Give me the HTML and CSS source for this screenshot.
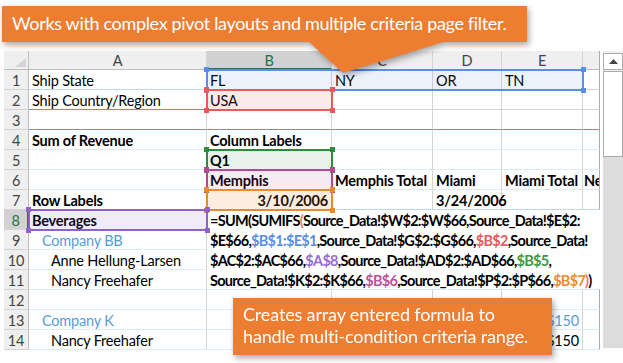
FILE: index.html
```html
<!DOCTYPE html>
<html lang="en">
<head>
  <meta charset="UTF-8">
  <title>Pivot criteria formula</title>
  <link rel="stylesheet" href="styles.css">
</head>
<body>
<div class="page">

  <div class="callout callout-top">
    Works with complex pivot layouts and multiple criteria page filter.
    <span class="pointer"></span>
  </div>

  <div class="sheet">
    <div class="grid-wrap">
      <div class="grid">
        <!-- column headers -->
        <div class="row hdr">
          <div class="corner"><svg width="25" height="19"><polygon points="11,16 22,7 22,16" fill="#d4d4d4"/></svg></div>
          <div>A</div><div class="sel">B</div><div>C</div><div>D</div><div>E</div><div class="f"></div>
        </div>

        <div class="row r1">
          <div class="rh">1</div><div>Ship State</div><div>FL</div><div>NY</div><div>OR</div><div>TN</div><div class="f"></div>
        </div>
        <div class="row r2">
          <div class="rh">2</div><div>Ship Country/Region</div><div>USA</div><div></div><div></div><div></div><div class="f"></div>
        </div>
        <div class="row r3">
          <div class="rh">3</div><div></div><div></div><div></div><div></div><div></div><div class="f"></div>
        </div>
        <div class="row pv">
          <div class="rh">4</div><div class="b">Sum of Revenue</div><div class="b">Column Labels</div><div></div><div></div><div></div><div class="f"></div>
        </div>
        <div class="row pv">
          <div class="rh">5</div><div></div><div class="b">Q1</div><div></div><div></div><div></div><div class="f"></div>
        </div>
        <div class="row pv">
          <div class="rh">6</div><div></div><div class="b">Memphis</div><div class="b">Memphis Total</div><div class="b">Miami</div><div class="b">Miami Total</div><div class="f b">Ne</div>
        </div>
        <div class="row pv r7">
          <div class="rh">7</div><div class="b">Row Labels</div><div class="b num">3/10/2006</div><div></div><div class="b num">3/24/2006</div><div></div><div class="f"></div>
        </div>
        <div class="row pv">
          <div class="rh active">8</div><div class="b">Beverages</div><div></div><div></div><div></div><div></div><div class="f"></div>
        </div>
        <div class="row pv">
          <div class="rh">9</div><div class="co ind1">Company BB</div><div></div><div></div><div></div><div></div><div class="f"></div>
        </div>
        <div class="row pv">
          <div class="rh">10</div><div class="ind2">Anne Hellung-Larsen</div><div></div><div></div><div></div><div></div><div class="f"></div>
        </div>
        <div class="row pv">
          <div class="rh">11</div><div class="ind2">Nancy Freehafer</div><div></div><div></div><div></div><div></div><div class="f"></div>
        </div>
        <div class="row pv">
          <div class="rh">12</div><div></div><div></div><div></div><div></div><div></div><div class="f"></div>
        </div>
        <div class="row pv">
          <div class="rh">13</div><div class="co ind1">Company K</div><div></div><div></div><div></div><div class="co num">$150</div><div class="f"></div>
        </div>
        <div class="row pv">
          <div class="rh">14</div><div class="ind2">Nancy Freehafer</div><div></div><div></div><div></div><div class="num">$150</div><div class="f"></div>
        </div>
      </div>

      <!-- edit layer: formula in B8 and its highlighted references -->
      <div class="grid layer">
        <div class="formula">
          <div>=SUM(SUMIFS<span class="x-paren">(</span>Source_Data!$W$2:$W$66,Source_Data!$E$2:</div>
          <div>$E$66,<span class="x-blue">$B$1:$E$1</span>,Source_Data!$G$2:$G$66,<span class="x-red">$B$2</span>,Source_Data!</div>
          <div>$AC$2:$AC$66,<span class="x-purple">$A$8</span>,Source_Data!$AD$2:$AD$66,<span class="x-green">$B$5</span>,</div>
          <div>Source_Data!$K$2:$K$66,<span class="x-magenta">$B$6</span>,Source_Data!$P$2:$P$66,<span class="x-orange">$B$7</span><span class="x-paren">)</span>)</div>
        </div>
        <div class="ref ref-blue"></div>
        <div class="ref ref-red"></div>
        <div class="ref ref-green"></div>
        <div class="ref ref-magenta"></div>
        <div class="ref ref-orange"></div>
        <div class="ref ref-purple"></div>
      </div>
    </div>

    <div class="vscroll">
      <div class="sb-btn"><svg width="9" height="5"><polygon points="0,5 4.5,0 9,5" fill="#444"/></svg></div>
      <div class="sb-thumb"></div>
      <div class="sb-track"></div>
    </div>
  </div>

  <div class="callout callout-bottom">
    Creates array entered formula to<br>
    handle multi-condition criteria range.
  </div>

</div>
</body>
</html>
```

FILE: styles.css
```css
body {
  margin: 0;
  background: #fff;
  font-family: Lato, "Liberation Sans", sans-serif;
}
.page {
  position: relative;
  width: 623px;
  height: 363px;
  overflow: hidden;
}

/* orange callouts */
.callout {
  background: #ed7d31;
  color: #fff;
  filter: drop-shadow(2px 3px 3px rgba(0,0,0,0.35));
}
.callout-top {
  position: relative;
  z-index: 5;
  margin: 6px 0 0 2px;
  width: 525px;
  height: 36px;
  box-sizing: border-box;
  padding-left: 10px;
  font-size: 18px;
  letter-spacing: -0.33px;
  line-height: 34px;
  white-space: nowrap;
}
.callout-top .pointer {
  position: absolute;
  left: 306px;
  top: 35px;
  width: 139px;
  height: 32px;
  background: #ed7d31;
  clip-path: polygon(0 0, 100% 0, 35px 100%);
}
.callout-bottom {
  position: absolute;
  z-index: 5;
  left: 233px;
  top: 298px;
  width: 319px;
  height: 57px;
  box-sizing: border-box;
  padding: 5px 0 0 10px;
  font-size: 18px;
  letter-spacing: -0.15px;
  line-height: 22px;
  white-space: nowrap;
}

/* sheet */
.sheet {
  display: flex;
  margin: 9px 0 0 4px;
}
.grid-wrap {
  position: relative;
}
.grid {
  display: grid;
  grid-template-columns: 25px 178px 125px 101px 69px 81px 17px;
  grid-template-rows: 19px repeat(14, 20px);
  font-size: 14.5px;
  letter-spacing: -0.2px;
  color: #000;
}
.row {
  display: contents;
}
.row > div {
  box-sizing: border-box;
  border-right: 1px solid #d4d4d4;
  border-bottom: 1px solid #d4d4d4;
  padding: 1px 3px 0;
  line-height: 19px;
  white-space: nowrap;
}
.row > div.f {
  overflow: hidden;
  padding-left: 1px;
  padding-right: 0;
  border-right-color: #ababab;
}

.hdr > div {
  background: #efefef;
  text-align: center;
  color: #444;
  border-bottom-color: #bdbdbd;
  line-height: 17px;
}
.hdr > div.corner {
  padding: 0;
  border-right-color: #bdbdbd;
}
.hdr > div.corner svg {
  display: block;
}
.hdr > div.sel {
  background: #d2d2d2;
  color: #217346;
  border-bottom: 2px solid #217346;
}
.row > div.rh {
  background: #efefef;
  color: #444;
  text-align: center;
  padding: 1px 0 0;
  border-right-color: #bdbdbd;
}
.row > div.rh.active {
  background: #d2d2d2;
  color: #217346;
  border-right: 2px solid #217346;
}

/* pivot borders */
.r1 > div:nth-child(2) { border-bottom-color: #bdd7ee; }
.r2 > div:nth-child(2) { border-bottom-color: #5b9bd5; }
.r3 > div:not(.rh) { border-bottom-color: #5b9bd5; }
.pv > div:not(.rh) { border-bottom-color: #ddebf7; }
.r7 > div:not(.rh) { border-bottom-color: #bdd7ee; }

.b { font-weight: bold; }
.num { text-align: right; }
.row > div.num { padding-right: 3px; }
.co { color: #5b9bd5; }
.row > div.ind1 { padding-left: 13px; }
.row > div.ind2 { padding-left: 22px; }

/* edit layer over the cells */
.layer {
  position: absolute;
  top: 0;
  left: 0;
  pointer-events: none;
}
.formula {
  grid-column: 3 / 8;
  grid-row: 9 / 13;
  margin-bottom: 1px;
  background: #fff;
  font-weight: bold;
  letter-spacing: -0.72px;
  line-height: 20px;
  padding: 1px 0 0 3px;
  white-space: nowrap;
  overflow: hidden;
}
.x-paren { color: #f0707a; }
.x-blue { color: #5b8ee6; }
.x-red { color: #e85a5a; }
.x-purple { color: #9a6bd6; }
.x-green { color: #3a9a4a; }
.x-magenta { color: #c0509a; }
.x-orange { color: #f08a2c; }

.ref {
  position: relative;
}
.ref::before {
  content: "";
  position: absolute;
  top: -1px;
  left: -1px;
  right: -1px;
  bottom: -1px;
  border: 2px solid currentColor;
}
.ref::after {
  content: "";
  position: absolute;
  top: -3px;
  left: -3px;
  right: -3px;
  bottom: -3px;
  background:
    linear-gradient(currentColor, currentColor) left top / 5px 5px no-repeat,
    linear-gradient(currentColor, currentColor) right top / 5px 5px no-repeat,
    linear-gradient(currentColor, currentColor) left bottom / 5px 5px no-repeat,
    linear-gradient(currentColor, currentColor) right bottom / 5px 5px no-repeat;
}
.ref-blue { grid-column: 3 / 7; grid-row: 2; color: #5b8ee6; background: rgba(70,120,220,0.1); }
.ref-red { grid-column: 3; grid-row: 3; color: #e85a5a; background: rgba(232,80,80,0.12); }
.ref-green { grid-column: 3; grid-row: 6; color: #2e8b3c; background: rgba(40,140,60,0.1); }
.ref-magenta { grid-column: 3; grid-row: 7; color: #b9458f; background: rgba(180,60,140,0.1); }
.ref-orange { grid-column: 3; grid-row: 8; color: #ea8a2e; background: rgba(235,130,40,0.14); }
.ref-purple { grid-column: 2; grid-row: 9; color: #8e62c8; background: rgba(130,90,200,0.12); }

/* vertical scrollbar */
.vscroll {
  display: flex;
  flex-direction: column;
  width: 20px;
  height: 297px;
  margin-left: 3px;
  padding-top: 2px;
  box-sizing: border-box;
  background: #f0f0f0;
}
.sb-btn {
  height: 15px;
  border: 1px solid #ababab;
  background: #fff;
  display: flex;
  align-items: center;
  justify-content: center;
}
.sb-thumb {
  height: 84px;
  margin-top: 1px;
  border: 1px solid #ababab;
  background: #fff;
}
.sb-track {
  flex: 1;
  background: #dcdcdc;
}
```
